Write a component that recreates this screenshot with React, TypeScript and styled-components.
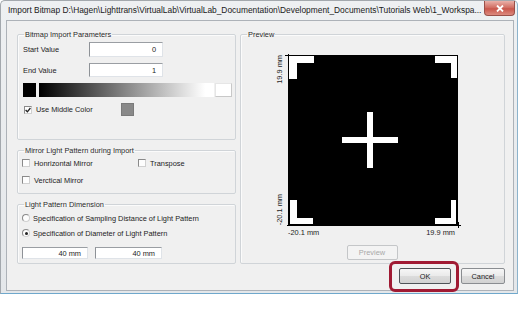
import React from 'react';
import styled, { createGlobalStyle } from 'styled-components';

const GlobalStyle = createGlobalStyle`
    html, body {
        margin: 0;
        padding: 0;
        background: #ffffff;
    }
    body {
        font-family: "Liberation Sans", Arial, sans-serif;
        font-size: 7.4px;
        color: #1c1c1c;
    }
`;

const StyledWindow = styled.div`
    width: 518px;
    height: 294px;
    box-sizing: border-box;
    display: flex;
    flex-direction: column;
    padding: 0 3px 2px 5px;
    border: 1px solid #a3a8ad;
    border-right-color: #8cb3cc;
    border-bottom-color: #6fa8cc;
    border-radius: 5px 5px 0 0;
    background: linear-gradient(#eef0f2, #e4e7ea);
`;

const StyledTitleBar = styled.div`
    height: 19px;
    flex-shrink: 0;
    display: flex;
    justify-content: space-between;
    align-items: flex-start;
`;

const StyledTitle = styled.div`
    padding-left: 2px;
    line-height: 18px;
    font-size: 8.4px;
    color: #202020;
    white-space: nowrap;
`;

const StyledClose = styled.div`
    width: 31px;
    height: 15px;
    margin-right: -1px;
    box-sizing: border-box;
    display: flex;
    align-items: center;
    justify-content: center;
    border: 1px solid #9a5049;
    border-top: none;
    border-radius: 0 0 4px 4px;
    background: linear-gradient(#eab1a9, #d06a5f 50%, #c9564b 55%, #dc8a7f);
`;

const StyledClient = styled.div`
    flex: 1;
    display: flex;
    flex-direction: column;
    padding: 8px 8px 0 10px;
    background: #f0f0f0;
    border: 1px solid #adb2b8;
`;

const StyledPanels = styled.div`
    display: grid;
    grid-template-columns: 219px 265px;
    column-gap: 4px;
    height: 235px;
`;

const StyledColumn = styled.div`
    display: flex;
    flex-direction: column;
    gap: 5px;
`;

const StyledGroup = styled.fieldset<{ $height: number }>`
    margin: 0;
    padding: 0;
    min-width: 0;
    height: ${p => p.$height}px;
    box-sizing: border-box;
    border: 1px solid #d0d4d8;
    border-radius: 2px;
    box-shadow: inset 1px 1px 0 #fbfbfb;
`;

const StyledLegend = styled.legend`
    margin-left: 6px;
    padding: 0 1px;
    line-height: 11px;
    color: #2a2a2a;
`;

const StyledBody = styled.div<{ $pad: string; $gap: number }>`
    display: flex;
    flex-direction: column;
    gap: ${p => p.$gap}px;
    padding: ${p => p.$pad};
`;

const StyledRow = styled.div<{ $height: number; $gap?: number; $top?: number }>`
    display: flex;
    align-items: center;
    height: ${p => p.$height}px;
    gap: ${p => p.$gap ?? 0}px;
    margin-top: ${p => p.$top ?? 0}px;
`;

const StyledFieldLabel = styled.span`
    width: 66px;
`;

const StyledTextBox = styled.div<{ $width: number; $height: number }>`
    width: ${p => p.$width}px;
    height: ${p => p.$height}px;
    box-sizing: border-box;
    display: flex;
    align-items: center;
    justify-content: flex-end;
    padding-right: 6px;
    background: #ffffff;
    border: 1px solid #dfe3e8;
    border-top-color: #9a9ea3;
    border-left-color: #8e9297;
`;

const StyledBlackSwatch = styled.div`
    width: 13px;
    height: 14px;
    background: #000000;
`;

const StyledGradient = styled.div`
    width: 175px;
    height: 14px;
    margin-left: 3px;
    background: linear-gradient(to right, #000000 0%, #7a7a7a 45%, #d8d8d8 80%, #ffffff 95%, #ffffff 100%);
`;

const StyledWhiteSwatch = styled.div`
    width: 17px;
    height: 14px;
    margin-left: 1px;
    box-sizing: border-box;
    background: #ffffff;
    border: 1px solid #c8c8c8;
    border-top-color: #e6e6e6;
    border-left-color: #e6e6e6;
`;

const StyledBox = styled.span<{ $round?: boolean; $indent?: number }>`
    width: 8px;
    height: 8px;
    flex-shrink: 0;
    margin-left: ${p => p.$indent ?? 0}px;
    box-sizing: border-box;
    display: flex;
    align-items: center;
    justify-content: center;
    border: 1px solid #8a8a8a;
    border-right-color: #d0d0d0;
    border-bottom-color: #d0d0d0;
    border-radius: ${p => (p.$round ? '50%' : '0')};
    background: #fdfdfd;
`;

const StyledDot = styled.span`
    width: 3px;
    height: 3px;
    border-radius: 50%;
    background: #222222;
`;

const StyledOptionText = styled.span<{ $width?: number; $gap: number }>`
    margin-left: ${p => p.$gap}px;
    ${p => (p.$width ? `width: ${p.$width}px;` : '')}
    white-space: nowrap;
`;

const StyledMiddleSwatch = styled.div`
    width: 13px;
    height: 13px;
    box-sizing: border-box;
    background: #898989;
    border: 1px solid #7a7a7a;
`;

const StyledOptionGrid = styled.div`
    display: grid;
    grid-template-columns: 116px auto;
    grid-auto-rows: 10px;
    row-gap: 7px;
    padding: 2px 0 0 4px;
`;

const StyledOption = styled.div`
    display: flex;
    align-items: center;
`;

const StyledChart = styled.div`
    display: grid;
    grid-template-columns: 9px 176px;
    column-gap: 1px;
    padding: 12px 0 0 34px;
`;

const StyledYLabels = styled.div`
    height: 176px;
    box-sizing: border-box;
    padding: 3px 0;
    display: flex;
    flex-direction: column;
    justify-content: space-between;
`;

const StyledYLabel = styled.span`
    writing-mode: vertical-rl;
    transform: rotate(180deg);
    line-height: 9px;
    white-space: nowrap;
`;

const StyledXLabels = styled.div`
    grid-column: 2;
    display: flex;
    justify-content: space-between;
    padding: 0 6px 0 3px;
    line-height: 10px;
`;

const StyledPreviewRow = styled.div`
    grid-column: 2;
    display: flex;
    justify-content: center;
    padding: 7px 2px 0 0;
`;

const StyledButton = styled.div<{ $width: number; $disabled?: boolean; $default?: boolean }>`
    position: relative;
    width: ${p => p.$width}px;
    height: ${p => (p.$disabled ? 15 : 16)}px;
    box-sizing: border-box;
    display: flex;
    align-items: center;
    justify-content: center;
    border: 1px solid ${p => (p.$disabled ? '#c4c6c8' : p.$default ? '#4f5358' : '#8a8d91')};
    border-radius: 2px;
    background: ${p =>
        p.$disabled ? '#f3f3f3' : 'linear-gradient(#f6f6f6, #eaeaea 50%, #dcdcdc 52%, #d2d2d2)'};
    color: ${p => (p.$disabled ? '#a8a8a8' : '#1c1c1c')};
`;

const StyledHighlight = styled.span`
    position: absolute;
    left: -11px;
    top: -8px;
    right: -9px;
    bottom: -9px;
    border: 3px solid #a01a33;
    border-radius: 6px;
    pointer-events: none;
`;

const StyledButtonRow = styled.div`
    display: flex;
    justify-content: flex-end;
    gap: 10px;
    margin-top: 4px;
`;

const CheckBox: React.FC<{ checked?: boolean; indent?: number }> = ({ checked, indent }) => (
    <StyledBox $indent={indent}>
        {checked && (
            <svg width="6" height="6" viewBox="0 0 6 6">
                <path d="M0.6 3 L2.4 4.8 L5.4 1" fill="none" stroke="#222" strokeWidth="1.3" />
            </svg>
        )}
    </StyledBox>
);

const Radio: React.FC<{ checked?: boolean }> = ({ checked }) => (
    <StyledBox $round>{checked && <StyledDot />}</StyledBox>
);

// the bitmap preview: black square with white corner marks and a cross
const PreviewPlot: React.FC = () => (
    <svg width="176" height="176" viewBox="0 0 176 176">
        <rect x="3" y="3" width="170" height="170" fill="#000" />
        <g fill="#fff">
            <rect x="4" y="4" width="25" height="7" />
            <rect x="4" y="4" width="8" height="23" />
            <rect x="150" y="4" width="22" height="7" />
            <rect x="166" y="4" width="6" height="22" />
            <rect x="5" y="148" width="7" height="24" />
            <rect x="5" y="166" width="23" height="6" />
            <rect x="150" y="166" width="21" height="6" />
            <rect x="166" y="148" width="5" height="24" />
            <rect x="57" y="85" width="56" height="6" />
            <rect x="82" y="60" width="6" height="56" />
        </g>
        <g stroke="#000" strokeWidth="1">
            <line x1="3.5" y1="2" x2="3.5" y2="174" />
            <line x1="0" y1="3.5" x2="4" y2="3.5" />
            <line x1="2" y1="173.5" x2="176" y2="173.5" />
            <line x1="173.5" y1="170" x2="173.5" y2="176" />
        </g>
    </svg>
);

const App: React.FC = () => (
    <>
        <GlobalStyle />
        <StyledWindow>
            <StyledTitleBar>
                <StyledTitle>
                    Import Bitmap D:\Hagen\Lighttrans\VirtualLab\VirtualLab_Documentation\Development_Documents\Tutorials
                    Web\1_Workspa...
                </StyledTitle>
                <StyledClose>
                    <svg width="8" height="7" viewBox="0 0 8 7">
                        <path d="M1 0.5 L7 6.5 M7 0.5 L1 6.5" stroke="#fff" strokeWidth="1.8" />
                    </svg>
                </StyledClose>
            </StyledTitleBar>
            <StyledClient>
                <StyledPanels>
                    <StyledColumn>
                        <StyledGroup $height={111}>
                            <StyledLegend>Bitmap Import Parameters</StyledLegend>
                            <StyledBody $pad="2px 0 0 5px" $gap={6}>
                                <StyledRow $height={15}>
                                    <StyledFieldLabel>Start Value</StyledFieldLabel>
                                    <StyledTextBox $width={74} $height={15}>0</StyledTextBox>
                                </StyledRow>
                                <StyledRow $height={14}>
                                    <StyledFieldLabel>End Value</StyledFieldLabel>
                                    <StyledTextBox $width={74} $height={14}>1</StyledTextBox>
                                </StyledRow>
                                <StyledRow $height={14}>
                                    <StyledBlackSwatch />
                                    <StyledGradient />
                                    <StyledWhiteSwatch />
                                </StyledRow>
                                <StyledRow $height={13}>
                                    <CheckBox checked indent={1} />
                                    <StyledOptionText $gap={4} $width={85}>
                                        Use Middle Color
                                    </StyledOptionText>
                                    <StyledMiddleSwatch />
                                </StyledRow>
                            </StyledBody>
                        </StyledGroup>
                        <StyledGroup $height={49}>
                            <StyledLegend>Mirror Light Pattern during Import</StyledLegend>
                            <StyledOptionGrid>
                                <StyledOption>
                                    <CheckBox />
                                    <StyledOptionText $gap={4}>Honrizontal Mirror</StyledOptionText>
                                </StyledOption>
                                <StyledOption>
                                    <CheckBox />
                                    <StyledOptionText $gap={4}>Transpose</StyledOptionText>
                                </StyledOption>
                                <StyledOption>
                                    <CheckBox />
                                    <StyledOptionText $gap={4}>Verctical Mirror</StyledOptionText>
                                </StyledOption>
                            </StyledOptionGrid>
                        </StyledGroup>
                        <StyledGroup $height={65}>
                            <StyledLegend>Light Pattern Dimension</StyledLegend>
                            <StyledBody $pad="3px 0 0 4px" $gap={5}>
                                <StyledRow $height={10}>
                                    <Radio />
                                    <StyledOptionText $gap={3}>
                                        Specification of Sampling Distance of Light Pattern
                                    </StyledOptionText>
                                </StyledRow>
                                <StyledRow $height={10}>
                                    <Radio checked />
                                    <StyledOptionText $gap={3}>Specification of Diameter of Light Pattern</StyledOptionText>
                                </StyledRow>
                                <StyledRow $height={12} $gap={7} $top={4}>
                                    <StyledTextBox $width={66} $height={12}>40 mm</StyledTextBox>
                                    <StyledTextBox $width={67} $height={12}>40 mm</StyledTextBox>
                                </StyledRow>
                            </StyledBody>
                        </StyledGroup>
                    </StyledColumn>
                    <StyledGroup $height={235}>
                        <StyledLegend>Preview</StyledLegend>
                        <StyledChart>
                            <StyledYLabels>
                                <StyledYLabel>19.9 mm</StyledYLabel>
                                <StyledYLabel>-20.1 mm</StyledYLabel>
                            </StyledYLabels>
                            <PreviewPlot />
                            <StyledXLabels>
                                <span>-20.1 mm</span>
                                <span>19.9 mm</span>
                            </StyledXLabels>
                            <StyledPreviewRow>
                                <StyledButton $width={51} $disabled>
                                    Preview
                                </StyledButton>
                            </StyledPreviewRow>
                        </StyledChart>
                    </StyledGroup>
                </StyledPanels>
                <StyledButtonRow>
                    <StyledButton $width={52} $default>
                        OK
                        <StyledHighlight />
                    </StyledButton>
                    <StyledButton $width={44}>Cancel</StyledButton>
                </StyledButtonRow>
            </StyledClient>
        </StyledWindow>
    </>
);

export default App;
